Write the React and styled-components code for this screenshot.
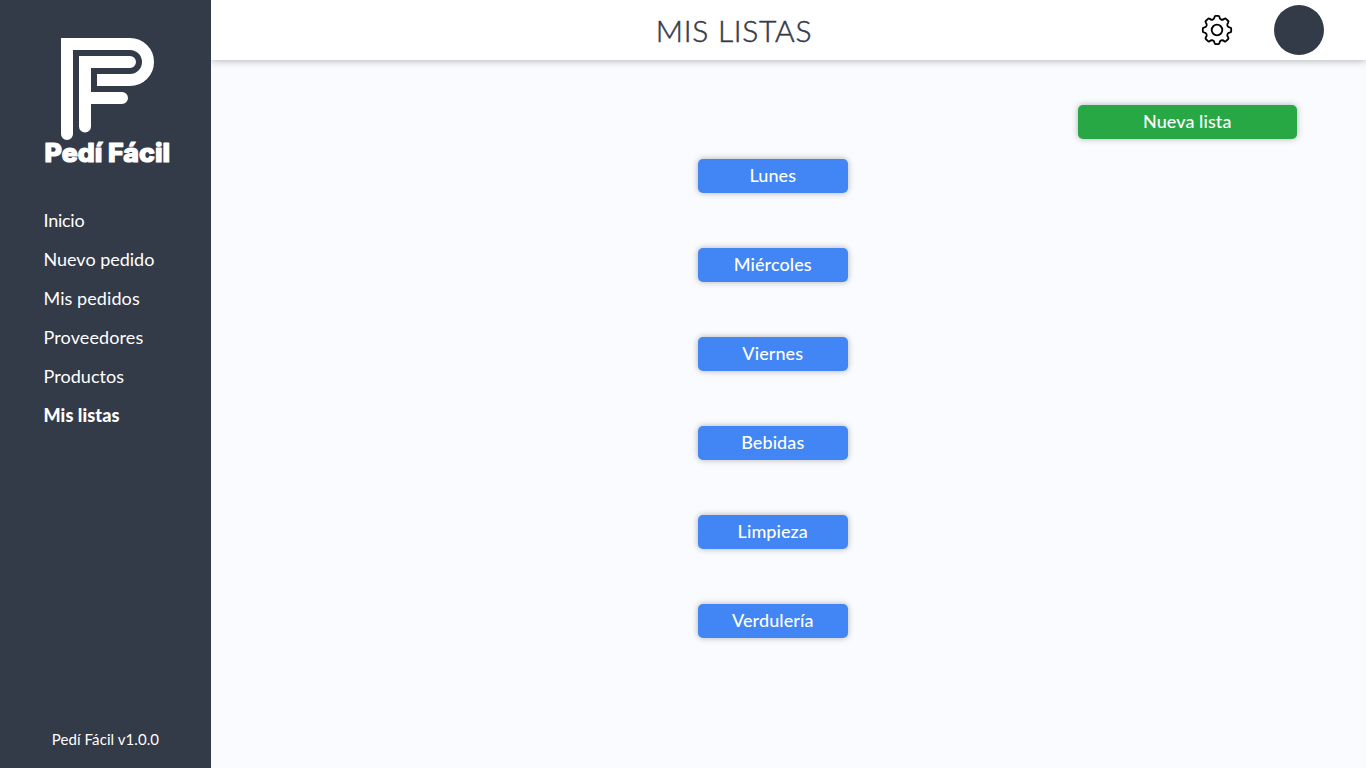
import React from "react";
import styled, { createGlobalStyle } from "styled-components";

const GlobalStyle = createGlobalStyle`
  * { box-sizing: border-box; }
  body { margin: 0; background: #fafbff; font-family: Lato, "Open Sans", sans-serif; }
`;

const Page = styled.div`
  display: flex;
  height: 100vh;
  overflow: hidden;
`;

const Sidebar = styled.aside`
  display: flex;
  flex-direction: column;
  width: 211px;
  flex: none;
  background: #333a48;
  color: #fff;
`;

const Logo = styled.svg`
  display: block;
  width: 140px;
  height: 136px;
  margin: 32px 0 0 38px;
`;

const Nav = styled.nav`
  display: flex;
  flex-direction: column;
  padding: 33px 0 0 43.5px;
`;

const NavLink = styled.a`
  height: 39px;
  line-height: 39px;
  font-size: 18px;
  font-weight: ${(p) => (p.$active ? 900 : 400)};
  letter-spacing: ${(p) => p.$track || 0}px;
  white-space: nowrap;
`;

const Version = styled.footer`
  margin-top: auto;
  height: 56px;
  line-height: 54px;
  text-align: center;
  font-size: 15px;
  letter-spacing: 0.08px;
`;

const Main = styled.div`
  display: flex;
  flex-direction: column;
  flex: 1;
`;

const Header = styled.header`
  display: flex;
  align-items: center;
  height: 60px;
  padding-right: 42px;
  background: #fff;
  box-shadow: 0 0 8px rgba(0, 0, 0, 0.35);
  clip-path: inset(0 0 -20px 0);
`;

const Title = styled.h1`
  flex: 1;
  margin: 0;
  padding: 0 0 0 56px;
  text-align: center;
  color: #333a48;
  font-size: 30px;
  line-height: 60px;
  font-weight: 300;
  letter-spacing: 0.7px;
  -webkit-text-stroke: 0.5px #333a48;
`;

const Gear = styled.svg`
  width: 32px;
  height: 32px;
  margin-right: 41px;
`;

const Avatar = styled.div`
  width: 50px;
  height: 50px;
  border-radius: 50%;
  background: #333a48;
`;

const Content = styled.main`
  display: flex;
  flex-direction: column;
  padding: 44.5px 69.5px 0 38px;
`;

const Button = styled.button`
  display: block;
  width: 150px;
  height: 34px;
  padding: 0 0 2px;
  border: 0;
  border-radius: 5px;
  background: #4285f4;
  color: #fff;
  font: 500 18px/32px Lato, sans-serif;
  letter-spacing: 0.08px;
  box-shadow: 0 0 6px rgba(0, 0, 0, 0.3);
`;

const NewListButton = styled(Button)`
  align-self: flex-end;
  width: 218.5px;
  background: #28a745;
`;

const Lists = styled.section`
  display: flex;
  flex-direction: column;
  align-items: center;
  gap: 55px;
  margin-top: 20.5px;
`;

const links = [
  { label: "Inicio", track: -0.25 },
  { label: "Nuevo pedido", track: -0.02 },
  { label: "Mis pedidos", track: 0.08 },
  { label: "Proveedores", track: 0.12 },
  { label: "Productos", track: 0.05 },
  { label: "Mis listas", track: 0.1, active: true },
];

const lists = ["Lunes", "Miércoles", "Viernes", "Bebidas", "Limpieza", "Verdulería"];

export default function App() {
  return (
    <Page>
      <GlobalStyle />
      <Sidebar>
        <Logo viewBox="38 32 140 136" fill="none" stroke="#fff" strokeWidth="12">
          <path d="M67 134V44H130a18 18 0 0 1 0 36H97" />
          <path d="M67 130v4M85 126.500V62H130M85 98H122" strokeLinecap="round" />
          <text
            x="44.500"
            y="162"
            fill="#fff"
            strokeWidth="1.200"
            strokeLinejoin="round"
            fontFamily="Inter, sans-serif"
            fontWeight="800"
            fontSize="26"
            textLength="125.500"
            lengthAdjust="spacingAndGlyphs"
          >
            Pedí Fácil
          </text>
        </Logo>
        <Nav>
          {links.map((l) => (
            <NavLink key={l.label} $active={l.active} $track={l.track}>
              {l.label}
            </NavLink>
          ))}
        </Nav>
        <Version>Pedí Fácil v1.0.0</Version>
      </Sidebar>
      <Main>
        <Header>
          <Title>MIS LISTAS</Title>
          <Gear viewBox="-16 -16 32 32" fill="none" stroke="#000" strokeWidth="1.800" strokeLinejoin="round">
            <circle r="5.300" />
            <path d="M-1.300-14.200H1.300Q2.300-14.200 2.400-13.200Q2.600-11 4.200-10.400Q5.800-9.800 7.400-11.200Q8.300-11.900 9-11.200L11.200-9Q11.900-8.300 11.200-7.400Q9.800-5.800 10.400-4.200Q11-2.600 13.200-2.400Q14.200-2.300 14.200-1.300V1.300Q14.200 2.300 13.200 2.400Q11 2.600 10.400 4.200Q9.800 5.800 11.200 7.400Q11.900 8.300 11.200 9L9 11.200Q8.300 11.900 7.400 11.200Q5.800 9.800 4.200 10.400Q2.600 11 2.400 13.200Q2.300 14.200 1.300 14.200H-1.300Q-2.300 14.200-2.400 13.200Q-2.600 11-4.200 10.400Q-5.800 9.800-7.400 11.200Q-8.300 11.900-9 11.200L-11.200 9Q-11.900 8.300-11.200 7.400Q-9.800 5.800-10.400 4.200Q-11 2.600-13.200 2.400Q-14.200 2.300-14.200 1.300V-1.300Q-14.200-2.300-13.200-2.400Q-11-2.600-10.400-4.200Q-9.800-5.800-11.200-7.400Q-11.900-8.300-11.200-9L-9-11.200Q-8.300-11.900-7.400-11.200Q-5.800-9.800-4.200-10.400Q-2.600-11-2.400-13.200Q-2.300-14.200-1.300-14.200Z" />
          </Gear>
          <Avatar />
        </Header>
        <Content>
          <NewListButton>Nueva lista</NewListButton>
          <Lists>
            {lists.map((name) => (
              <Button key={name}>{name}</Button>
            ))}
          </Lists>
        </Content>
      </Main>
    </Page>
  );
}
